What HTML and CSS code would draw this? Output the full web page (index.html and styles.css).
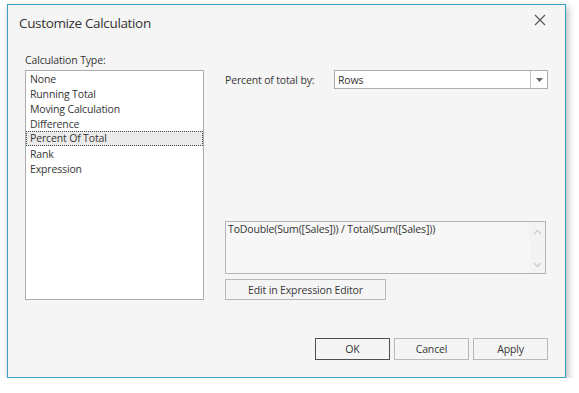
FILE: index.html
```html
<!DOCTYPE html>
<html>
<head>
<meta charset="utf-8">
<link rel="stylesheet" href="styles.css">
</head>
<body>
<div class="dialog">
  <div class="titlebar">
    <span class="title">Customize Calculation</span>
    <span class="close">
      <svg width="12" height="12" viewBox="0 0 12 12"><path d="M1 1 L11 11 M11 1 L1 11" stroke="#555" stroke-width="1.1" fill="none"/></svg>
    </span>
  </div>
  <div class="content">
    <div class="left">
      <div class="label">Calculation Type:</div>
      <div class="list">
        <div class="item">None</div>
        <div class="item">Running Total</div>
        <div class="item">Moving Calculation</div>
        <div class="item">Difference</div>
        <div class="item selected">Percent Of Total</div>
        <div class="item">Rank</div>
        <div class="item">Expression</div>
      </div>
    </div>
    <div class="right">
      <div class="row">
        <span class="rowlabel">Percent of total by:</span>
        <div class="combo">
          <span class="combotext">Rows</span>
          <span class="dropbtn"><svg width="7" height="4" viewBox="0 0 7 4"><path d="M0 0 H7 L3.5 4 Z" fill="#666"/></svg></span>
        </div>
      </div>
      <div class="bottomgroup">
        <div class="memo">
          <div class="memotext">ToDouble(Sum([Sales])) / Total(Sum([Sales]))</div>
          <div class="scroll">
            <svg width="9" height="6" viewBox="0 0 9 6"><path d="M1 5 L4.5 1.5 L8 5" stroke="#c8c8c8" stroke-width="1.2" fill="none"/></svg>
            <svg width="9" height="6" viewBox="0 0 9 6"><path d="M1 1 L4.5 4.5 L8 1" stroke="#c8c8c8" stroke-width="1.2" fill="none"/></svg>
          </div>
        </div>
        <div class="btn editbtn">Edit in Expression Editor</div>
      </div>
    </div>
  </div>
  <div class="footer">
    <div class="btn fbtn ok">OK</div>
    <div class="btn fbtn">Cancel</div>
    <div class="btn fbtn">Apply</div>
  </div>
</div>
</body>
</html>
```

FILE: styles.css
```css
html, body {
  margin: 0;
  padding: 0;
  background: #ffffff;
}
body {
  padding: 4px 0 0 7px;
  font-family: "Open Sans", "Noto Sans", sans-serif;
  font-size: 10.5px;
  letter-spacing: -0.15px;
  color: #353535;
}
.dialog {
  width: 557px;
  height: 372px;
  border: 1px solid #3a9fc4;
  background: #f5f5f5;
  box-shadow: 2px 3px 7px rgba(0,0,0,0.3);
  display: flex;
  flex-direction: column;
  box-sizing: content-box;
}
.titlebar {
  height: 34px;
  display: flex;
  align-items: flex-start;
  justify-content: space-between;
  padding: 0 19px 0 11px;
}
.title {
  font-size: 13.5px;
  color: #333;
  margin-top: 9px;
  letter-spacing: -0.35px;
}
.close {
  margin-top: 9px;
  display: flex;
}
.content {
  display: flex;
  padding: 0 17px 0 17px;
  gap: 21px;
}
.left {
  width: 179px;
  display: flex;
  flex-direction: column;
}
.label {
  height: 16px;
  line-height: 16px;
  margin-top: 13px;
  margin-bottom: 2px;
}
.list {
  height: 228px;
  border: 1px solid #acacac;
  background: #fff;
}
.item {
  height: 15px;
  line-height: 14px;
  padding: 1px 0 0 4px;
  box-sizing: border-box;
}
.item.selected {
  background: #ebebeb;
  border: 1px dotted #444;
  line-height: 13px;
  padding: 0 0 0 3px;
}
.right {
  flex: 1;
  display: flex;
  flex-direction: column;
  justify-content: space-between;
  padding-top: 31px;
}
.row {
  display: flex;
  align-items: center;
}
.rowlabel {
  width: 109px;
  padding-top: 1px;
}
.combo {
  flex: 1;
  height: 19px;
  border: 1px solid #acacac;
  background: #fff;
  display: flex;
  box-sizing: border-box;
}
.combotext {
  flex: 1;
  line-height: 17px;
  padding: 1px 0 0 3px;
}
.dropbtn {
  width: 16px;
  border-left: 1px solid #c4c4c4;
  display: flex;
  align-items: center;
  justify-content: center;
}
.bottomgroup {
  display: flex;
  flex-direction: column;
  gap: 5px;
}
.memo {
  width: 321px;
  height: 53px;
  border: 1px solid #b4b4b4;
  background: #f7f7f7;
  box-sizing: border-box;
  display: flex;
}
.memotext {
  flex: 1;
  padding: 0 0 0 2px;
  line-height: 14px;
}
.scroll {
  width: 16px;
  display: flex;
  flex-direction: column;
  align-items: center;
  justify-content: space-between;
  padding: 7px 0 5px;
  background: #f3f3f3;
}
.btn {
  border: 1px solid #b9b9b9;
  background: #f5f5f5;
  box-sizing: border-box;
  display: flex;
  align-items: center;
  justify-content: center;
}
.editbtn {
  width: 161px;
  height: 21px;
}
.footer {
  display: flex;
  justify-content: flex-end;
  gap: 4px;
  padding: 38px 17px 0 0;
}
.fbtn {
  width: 75px;
  height: 22px;
}
.fbtn.ok {
  border-color: #505050;
}
```
